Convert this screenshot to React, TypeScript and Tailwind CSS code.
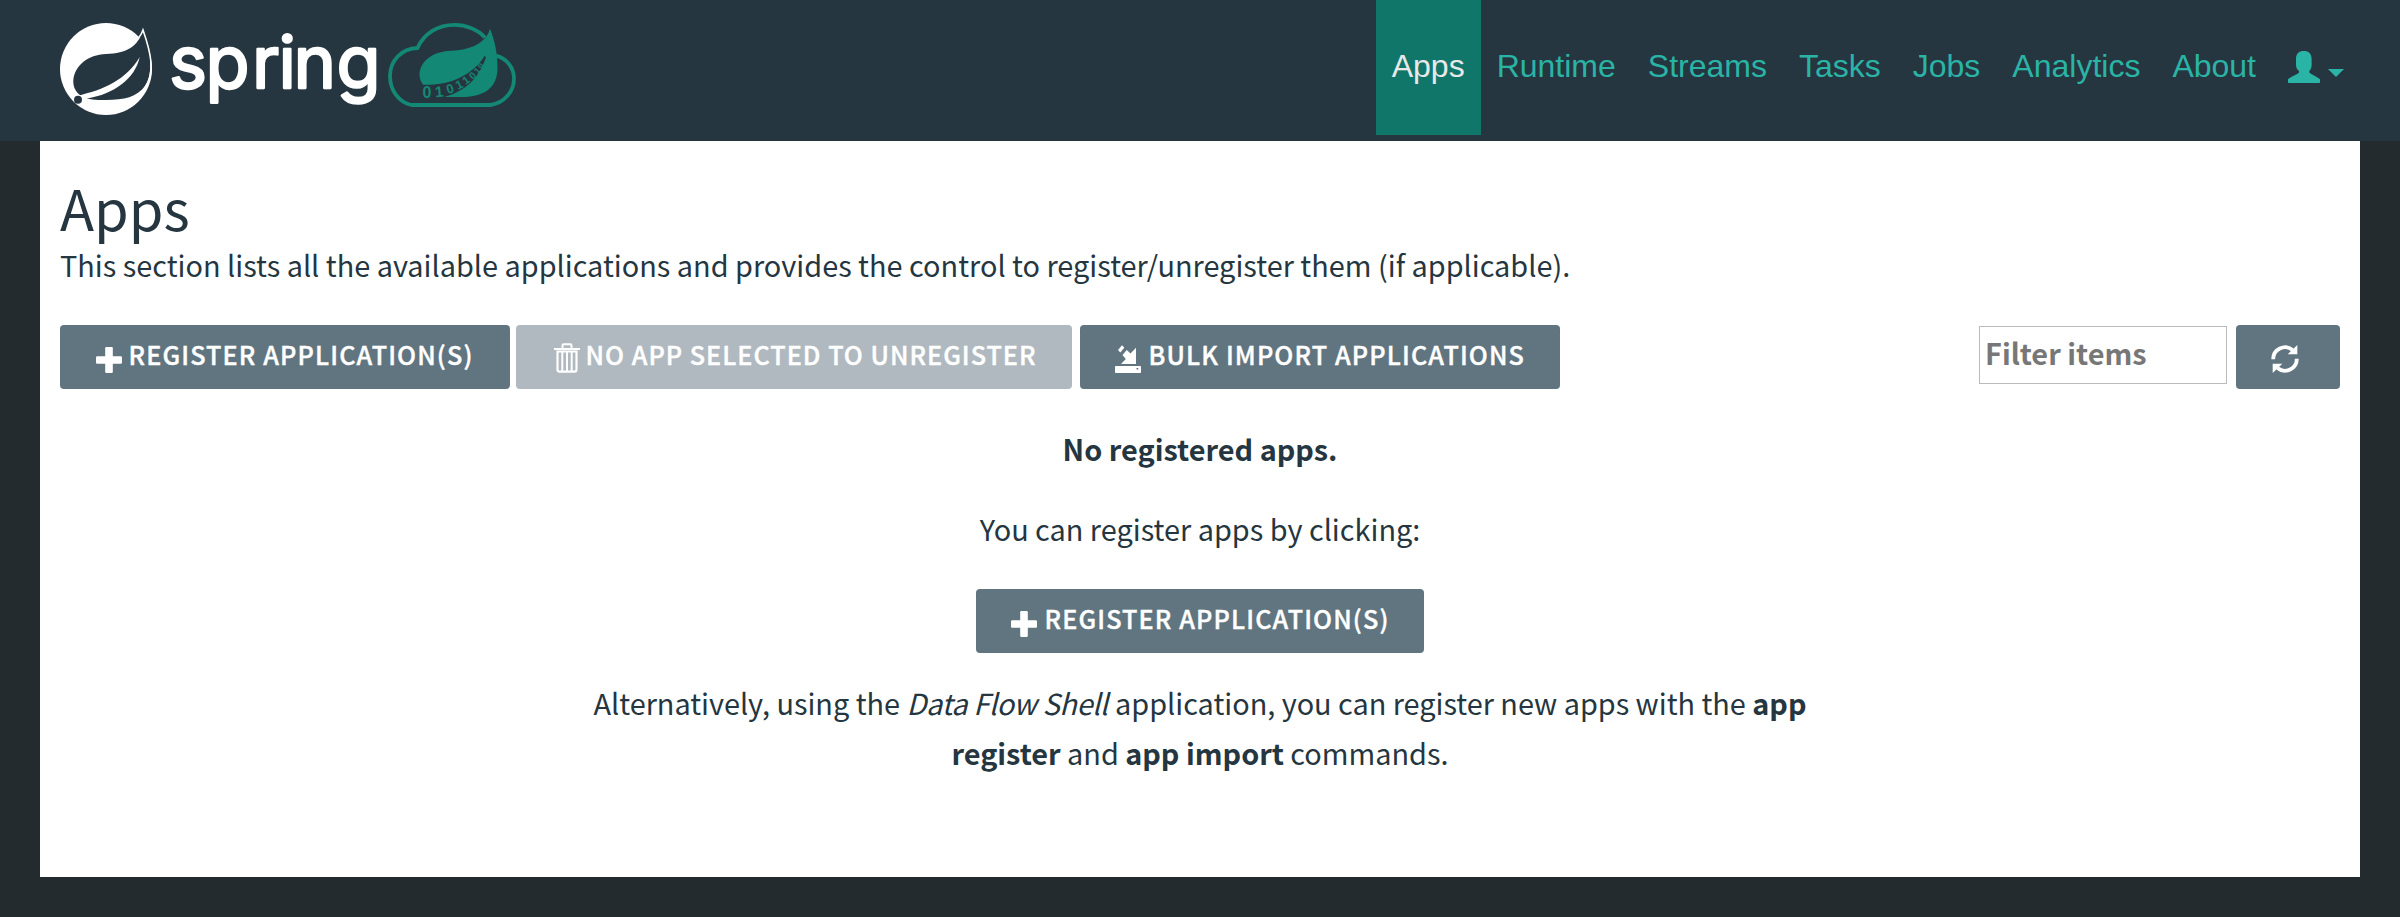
import React from "react";

const NAV = ["Runtime", "Streams", "Tasks", "Jobs", "Analytics", "About"];

const WORDMARK = [
  { ch: "s", x: 169 },
  { ch: "p", x: 205.5 },
  { ch: "r", x: 252 },
  { ch: "i", x: 278.5 },
  { ch: "n", x: 293.5 },
  { ch: "g", x: 336.5 },
];

const DIGITS = [
  { ch: "0", x: 427, y: 92.5, size: 16, turn: 0 },
  { ch: "1", x: 439, y: 91.5, size: 15, turn: -6 },
  { ch: "0", x: 450, y: 88.5, size: 13, turn: -16 },
  { ch: "1", x: 459, y: 84.5, size: 12, turn: -26 },
  { ch: "1", x: 466, y: 80, size: 11, turn: -36 },
  { ch: "0", x: 472.5, y: 75.5, size: 10, turn: -42 },
  { ch: "1", x: 477, y: 70.5, size: 9, turn: -48 },
  { ch: "0", x: 480.5, y: 65.5, size: 8, turn: -55 },
];

function Logo() {
  return (
    <svg width="480" height="141" viewBox="50 0 480 141" className="block">
      <circle cx="106" cy="69" r="46" fill="#fff" />
      <path
        fill="#263640"
        d="M142.7 31C138 46 127 53.5 106 54C88 54.5 74 66 73.3 81C73.2 87 75.5 91.5 80 95C86 99.5 96 100.5 106 100C124 100 137 97 145 86C153.5 74 151.5 50 142.7 31Z"
      />
      <path
        fill="none"
        stroke="#fff"
        strokeWidth="1.6"
        strokeLinejoin="miter"
        d="M138.5 38C140.5 35.5 142 33 143 30C151 53 155.5 73 145 87.5"
      />
      <path fill="#fff" d="M77 95.8C104 90 127 79 139.7 57C135 79 114 94 87 98.5L80 101Z" />
      <circle cx="78" cy="99.7" r="4" fill="#263640" />
      <g
        fill="#fff"
        stroke="#fff"
        strokeWidth="2.3"
        strokeLinejoin="round"
        className="font-['Inter',sans-serif]"
        fontSize="72"
      >
        {WORDMARK.map((l) => (
          <text key={l.ch} x={l.x} y="87.5">
            {l.ch}
          </text>
        ))}
      </g>
      <path
        fill="none"
        stroke="#138874"
        strokeWidth="3.8"
        d="M411 105H490.500C504 103 514 92 514 78.500C514 68 507 58.500 496 55.700M485 37.500C478 29.500 466 24.800 454.500 24.800C438 24.800 424 33.500 417.500 48C402 48.500 390 60 390 76.300C390 91 399.500 102.500 411 105"
      />
      <path
        fill="#138874"
        d="M490 28.700C487 40 475 50 450.700 50.700C432 51.500 419.500 62 419.500 75C419.500 79 421 82 423 84.700C448 86 472 76 484.500 56L486 57C481 74 468 91 444 97H462C484 97 497.500 88 497.500 68C497.500 52 494.500 40 490 28.700Z"
      />
      <g fill="#138874" className="font-['Liberation_Sans',sans-serif]" fontWeight="700" textAnchor="middle">
        {DIGITS.map((d, i) => (
          <text
            key={i}
            fontSize={d.size}
            transform={`translate(${d.x} ${d.y}) rotate(${d.turn})`}
            y={d.size * 0.36}
          >
            {d.ch}
          </text>
        ))}
      </g>
    </svg>
  );
}

function PlusIcon() {
  return (
    <svg width="26" height="26" viewBox="0 0 26 26" fill="#fff" className="mt-1.5 shrink-0">
      <rect x="9.200" y="0" width="7.600" height="26" rx="1.200" />
      <rect x="0" y="9.200" width="26" height="7.600" rx="1.200" />
    </svg>
  );
}

function TrashIcon() {
  return (
    <svg width="26" height="30" viewBox="0 0 26 30" fill="none" stroke="#fff" className="mt-0.5 shrink-0">
      <path strokeWidth="2" d="M0 6H26" />
      <path strokeWidth="2" d="M8.500 6V2.500Q8.500 1.200 9.800 1.200H16.200Q17.500 1.200 17.500 2.500V6" />
      <path strokeWidth="2.200" d="M3.500 8.500V26.500Q3.500 28.700 5.500 28.700H20.500Q22.500 28.700 22.500 26.500V8.500Z" />
      <path strokeWidth="2" d="M8.300 9V28M13 9V28M17.700 9V28" />
    </svg>
  );
}

function ImportIcon() {
  return (
    <svg width="26" height="28" viewBox="0 0 26 28" fill="#fff" className="mt-1 shrink-0">
      <path d="M7 .3L9.300 2.800L5.300 7.500L3 5Z" />
      <path d="M11.800 5L15.500 8.500L21 2.700V19H6L10.800 14L7.500 10Z" />
      <path fillRule="evenodd" d="M.8 21H25.200Q26 21 26 21.800V27.200Q26 28 25.200 28H.8Q0 28 0 27.200V21.800Q0 21 .8 21ZM21.500 23V24.600H23.300V23Z" />
    </svg>
  );
}

function RefreshIcon() {
  return (
    <svg width="28" height="28" viewBox="0 0 28 28" fill="none" stroke="#fff" strokeWidth="3.800" className="mt-1">
      <path d="M2.200 14.300A11.800 11.800 0 0 1 21.500 5" />
      <path fill="#fff" stroke="none" d="M26.300 0V9.300H16.700Z" />
      <path d="M25.800 13.700A11.800 11.800 0 0 1 6.500 23" />
      <path fill="#fff" stroke="none" d="M1.700 28V18.700H11.300Z" />
    </svg>
  );
}

function UserIcon() {
  return (
    <svg width="32" height="32" viewBox="0 0 32 32" fill="#2ab4a6">
      <path d="M8 8C8 2.500 11 0 15.800 0S23.600 2.500 23.600 8V14C23.600 17 22.500 19 21.300 20V21.500C24 24 29 25.500 32 28.300V31.200Q32 32 31.200 32H.8Q0 32 0 31.200V28.300C3 25.500 8.500 24 11 21.500V20C9.500 19 8 17 8 14Z" />
    </svg>
  );
}

function Button({
  className,
  icon,
  children,
}: {
  className: string;
  icon: React.ReactNode;
  children: React.ReactNode;
}) {
  return (
    <button
      className={`flex h-16 items-center rounded-[4px] text-[25.2px] font-medium whitespace-nowrap text-white [-webkit-text-stroke:0.4px_white] ${className}`}
    >
      {icon}
      <span className="pb-1.5 leading-[38px]">{children}</span>
    </button>
  );
}

export default function App() {
  return (
    <div className="h-[917px] w-[2400px] overflow-hidden bg-[#242b2e] text-[#253640]">
      <header className="flex h-[141px] justify-between bg-[#263640] pr-10 pl-[50px] font-['Liberation_Sans',sans-serif] text-[32px] leading-[48px] text-[#2ab4a6]">
        <Logo />
        <nav className="flex">
          <a className="h-[135px] bg-[#10766a] px-4 pt-[42px] text-[#e8e8e8]">Apps</a>
          {NAV.map((n) => (
            <a key={n} className="px-4 pt-[42px]">
              {n}
            </a>
          ))}
          <a className="flex gap-2 px-4 pt-[51px]">
            <UserIcon />
            <svg width="16" height="8" viewBox="0 0 16 8" fill="#2ab4a6" className="mt-[18px]">
              <path d="M0 0H16L8 8Z" />
            </svg>
          </a>
        </nav>
      </header>
      <main className="mx-10 h-[736px] bg-white px-5 pt-[31px] font-['Noto_Sans_CJK_SC',sans-serif] text-[28.88px] leading-[50px]">
        <h1 className="text-[56px] leading-[69px]">Apps</h1>
        <p className="leading-[46px]">
          This section lists all the available applications and provides the control to register/unregister them (if
          applicable).
        </p>
        <div className="mt-[38px] flex">
          <Button className="w-[450px] gap-[6.5px] bg-[#617580] pl-9 tracking-[1.14px]" icon={<PlusIcon />}>
            REGISTER APPLICATION(S)
          </Button>
          <Button className="ml-1.5 w-[556px] gap-[5.5px] bg-[#b0b9bf] pl-[38px] tracking-[1.02px]" icon={<TrashIcon />}>
            NO APP SELECTED TO UNREGISTER
          </Button>
          <Button className="ml-2 w-[480px] gap-[7.5px] bg-[#617580] pl-[35px] tracking-[1.14px]" icon={<ImportIcon />}>
            BULK IMPORT APPLICATIONS
          </Button>
          <input
            className="mt-px ml-auto h-[58px] w-[248px] border border-[#bbb] px-[5px] pb-[6px] font-bold placeholder:text-[#777] placeholder:opacity-100"
            placeholder="Filter items"
          />
          <button className="ml-[9px] flex h-16 w-[104px] items-center justify-center rounded-[4px] bg-[#617580] pr-[6px]">
            <RefreshIcon />
          </button>
        </div>
        <section className="flex flex-col items-center text-center">
          <p className="mt-[34px] font-bold">No registered apps.</p>
          <p className="mt-[30px]">You can register apps by clicking:</p>
          <Button className="mt-9 w-[448px] gap-[7.5px] bg-[#617580] pl-[35px] tracking-[1.14px]" icon={<PlusIcon />}>
            REGISTER APPLICATION(S)
          </Button>
          <p className="mt-6 w-[1240px] tracking-[-0.02px]">
            Alternatively, using the <em className="mr-px tracking-[-0.38px]">Data Flow Shell</em> application, you can
            register new apps with the <b>app</b> <b>register</b> and <b>app import</b> commands.
          </p>
        </section>
      </main>
    </div>
  );
}
